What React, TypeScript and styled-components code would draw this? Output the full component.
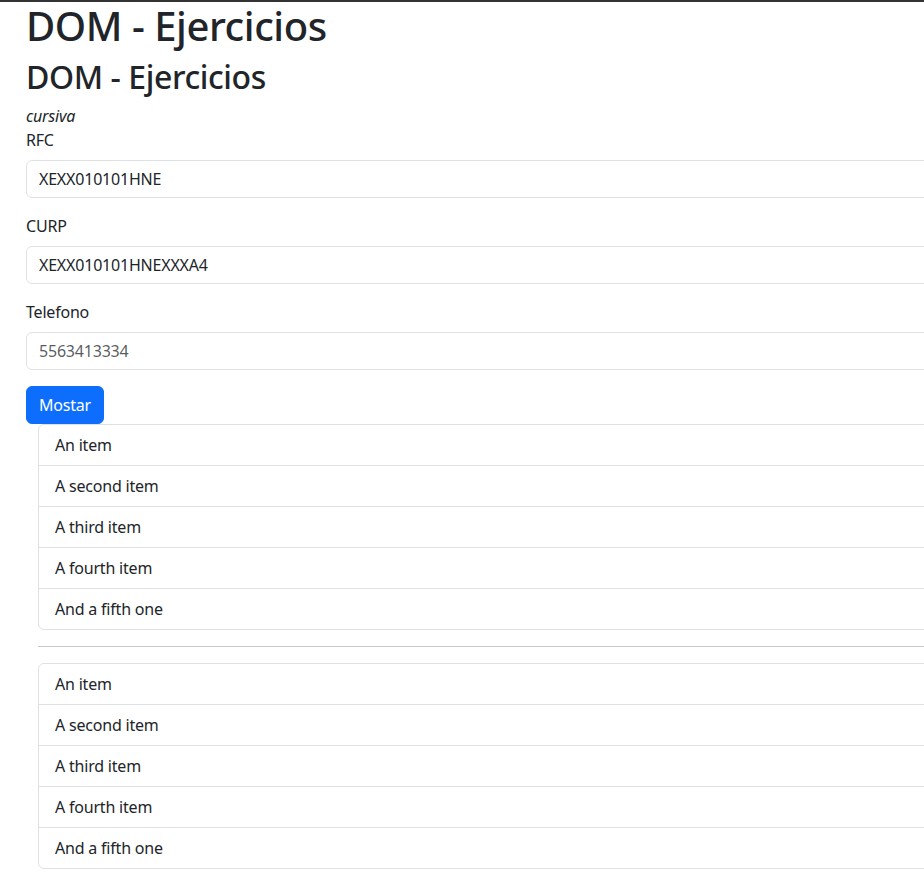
import React from "react";
import styled, { createGlobalStyle } from "styled-components";

const Global = createGlobalStyle`
  html, body { margin: 0; padding: 0; background: #fff; overflow: hidden; }
  body {
    font-family: "Noto Sans", "Open Sans", sans-serif;
    color: #212529;
    font-size: 16px;
    line-height: 1.5;
    letter-spacing: -0.2px;
  }
  * { box-sizing: border-box; }
`;

const TopBar = styled.div`
  height: 2px;
  background: #333;
`;

const Container = styled.div`
  width: 1100px;
  padding-left: 26px;
`;

const Title = styled.h1`
  margin: 0 0 8px;
  font-size: 40px;
  font-weight: 500;
  line-height: 48px;
  letter-spacing: -0.45px;
`;

const Subtitle = styled.h2`
  margin: 0 0 8px;
  font-size: 32px;
  font-weight: 500;
  line-height: 38px;
  letter-spacing: -0.4px;
`;

const Cursive = styled.i`
  display: block;
  line-height: 24px;
`;

const Field = styled.div`
  margin-bottom: 16px;
`;

const Label = styled.label`
  display: block;
  line-height: 24px;
  margin-bottom: 8px;
`;

const Input = styled.input`
  display: block;
  width: 100%;
  height: 38px;
  padding: 6px 12px;
  font: inherit;
  font-size: 16px;
  line-height: 24px;
  letter-spacing: -0.2px;
  color: #212529;
  background: #fff;
  border: 1px solid #dee2e6;
  border-radius: 6px;
  outline: none;
  &::placeholder { color: rgba(33, 37, 41, 0.75); }
`;

const Button = styled.button`
  display: block;
  height: 38px;
  padding: 6px 12px;
  font: inherit;
  font-size: 16px;
  line-height: 24px;
  letter-spacing: -0.2px;
  color: #fff;
  background: #0d6efd;
  border: 1px solid #0d6efd;
  border-radius: 6px;
`;

const ListWrap = styled.div`
  padding-left: 12px;
`;

const ListGroup = styled.ul`
  list-style: none;
  margin: 0;
  padding: 0;
  border: 1px solid #dee2e6;
  border-radius: 6px;
`;

const ListItem = styled.li`
  padding: 8px 16px;
  line-height: 24px;
  border-top: 1px solid #dee2e6;
  &:first-child { border-top: none; }
`;

const Rule = styled.hr`
  margin: 16px 0;
  border: 0;
  border-top: 1px solid #212529;
  opacity: 0.25;
`;

const items = ["An item", "A second item", "A third item", "A fourth item", "And a fifth one"];

function Items() {
  return (
    <ListGroup>
      {items.map((t) => (
        <ListItem key={t}>{t}</ListItem>
      ))}
    </ListGroup>
  );
}

export default function App() {
  return (
    <>
      <Global />
      <TopBar />
      <Container>
        <Title>DOM - Ejercicios</Title>
        <Subtitle>DOM - Ejercicios</Subtitle>
        <Cursive>cursiva</Cursive>
        <Field>
          <Label>RFC</Label>
          <Input defaultValue="XEXX010101HNE" />
        </Field>
        <Field>
          <Label>CURP</Label>
          <Input defaultValue="XEXX010101HNEXXXA4" />
        </Field>
        <Field>
          <Label>Telefono</Label>
          <Input placeholder="5563413334" />
        </Field>
        <Button>Mostar</Button>
        <ListWrap>
          <Items />
          <Rule />
          <Items />
        </ListWrap>
      </Container>
    </>
  );
}
